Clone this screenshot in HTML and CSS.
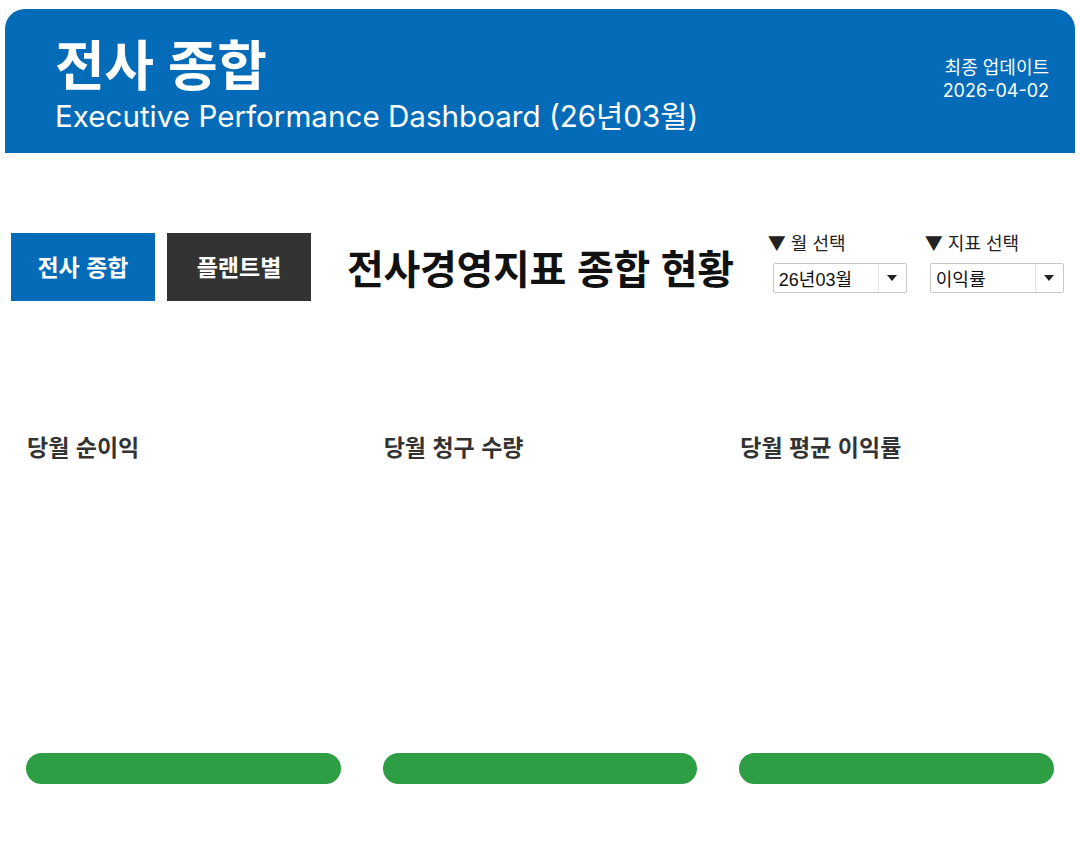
FILE: index.html
```html
<!DOCTYPE html>
<html lang="ko">
<head>
<meta charset="utf-8">
<link rel="stylesheet" href="styles.css">
</head>
<body>
<header class="hero">
  <div class="hero-text">
    <h1 class="hero-title">전사 종합</h1>
    <div class="hero-sub">Executive Performance Dashboard (26년03월)</div>
  </div>
  <div class="hero-meta">
    <div>최종 업데이트</div>
    <div>2026-04-02</div>
  </div>
</header>

<section class="toolbar">
  <button class="tab tab-active">전사 종합</button>
  <button class="tab tab-dark">플랜트별</button>
  <h2 class="page-title">전사경영지표 종합 현황</h2>
  <div class="filters">
    <div class="filter">
      <div class="filter-label">▼ 월 선택</div>
      <div class="select"><span class="select-value">26년03월</span><span class="select-arrow"></span></div>
    </div>
    <div class="filter">
      <div class="filter-label">▼ 지표 선택</div>
      <div class="select"><span class="select-value">이익률</span><span class="select-arrow"></span></div>
    </div>
  </div>
</section>

<section class="cards">
  <div class="card">
    <h3 class="card-title">당월 순이익</h3>
    <div class="bar"></div>
  </div>
  <div class="card">
    <h3 class="card-title">당월 청구 수량</h3>
    <div class="bar"></div>
  </div>
  <div class="card">
    <h3 class="card-title">당월 평균 이익률</h3>
    <div class="bar"></div>
  </div>
</section>
</body>
</html>
```
FILE: styles.css
```css
* { box-sizing: border-box; }
body {
  margin: 0;
  background: #fff;
  font-family: "Noto Sans CJK KR", "Noto Sans", sans-serif;
  color: #111;
}
.hero {
  margin: 9px 5px 0 5px;
  height: 144px;
  background: #036bb8;
  border-radius: 20px 20px 0 0;
  color: #fff;
  display: flex;
  justify-content: space-between;
  align-items: flex-start;
  padding: 20px 26px 0 50px;
}
.hero-title {
  margin: 0;
  font-size: 54px;
  font-weight: 700;
  line-height: 68px;
  letter-spacing: -0.5px;
}
.hero-sub {
  font-family: Inter, "Noto Sans CJK KR", sans-serif;
  font-size: 29.6px;
  line-height: 36px;
  margin-top: 1px;
}
.hero-meta {
  margin-top: 27px;
  font-family: Inter, "Noto Sans CJK KR", sans-serif;
  font-size: 18px;
  line-height: 23px;
  text-align: right;
}
.toolbar {
  display: flex;
  align-items: center;
  padding: 0 11px;
  margin-top: 80px;
  height: 68px;
}
.tab {
  width: 144px;
  height: 68px;
  border: none;
  color: #fff;
  font-family: "Noto Sans CJK KR", sans-serif;
  font-size: 23px;
  font-weight: 700;
  margin-right: 12px;
  padding: 0 0 3px 0;
}
.tab-active { background: #036bb8; }
.tab-dark { background: #333; }
.page-title {
  margin: 0 0 0 24px;
  font-size: 40px;
  font-weight: 700;
  color: #111;
  letter-spacing: -0.3px;
}
.filters {
  display: flex;
  margin-left: 34px;
  gap: 18px;
  align-self: flex-start;
}
.filter-label {
  font-size: 18px;
  line-height: 20px;
  color: #222;
  margin-top: -1px;
}
.select {
  margin: 11px 0 0 5px;
  width: 134px;
  height: 30px;
  border: 1px solid #c8c8c8;
  border-radius: 2px;
  display: flex;
  align-items: center;
  font-family: "Liberation Sans", "Noto Sans CJK KR", sans-serif;
  font-size: 18px;
  color: #111;
}
.select-value {
  flex: 1;
  padding-left: 5px;
}
.select-arrow {
  width: 28px;
  height: 100%;
  border-left: 1px solid #e4e4e4;
  display: flex;
  align-items: center;
  justify-content: center;
}
.select-arrow::after {
  content: "";
  border-left: 5px solid transparent;
  border-right: 5px solid transparent;
  border-top: 6px solid #222;
}
.cards {
  display: flex;
  gap: 12px;
  padding: 0 11px;
  margin-top: 129px;
}
.card {
  width: 345px;
  padding: 0 15px;
}
.card-title {
  margin: 0 0 0 1px;
  font-size: 23px;
  font-weight: 700;
  color: #333;
  line-height: 32px;
}
.bar {
  margin-top: 291px;
  height: 31px;
  background: #2e9e44;
  border-radius: 16px;
}
```
